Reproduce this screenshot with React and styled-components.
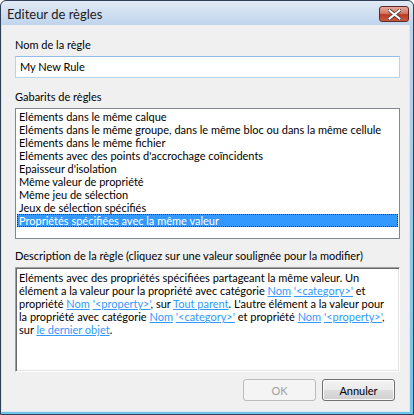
import React from "react";
import styled, { createGlobalStyle } from "styled-components";

const Global = createGlobalStyle`
  html, body {
    margin: 0;
    padding: 0;
    background: #ffffff;
  }
  body {
    font-family: "Segoe UI", Lato, "Open Sans", sans-serif;
    font-size: 11px;
    color: #000;
  }
`;

const Window = styled.div`
  width: 414px;
  height: 415px;
  box-sizing: border-box;
  border: 1px solid #2e3f57;
  border-radius: 6px 6px 0 0;
  background: linear-gradient(180deg, #e1eaf5 0px, #bed3ec 25px, #6fc3ea 100%);
  display: flex;
  flex-direction: column;
  overflow: hidden;
`;

const TitleBar = styled.div`
  height: 24px;
  flex: none;
  display: flex;
  align-items: center;
  justify-content: space-between;
  padding: 0 4px 0 6px;
`;

const Title = styled.span`
  font-size: 13px;
  color: #1b1b1b;
  line-height: 1;
  margin-top: 2px;
`;

const CloseButton = styled.div`
  width: 30px;
  height: 16px;
  margin-top: 2px;
  box-sizing: border-box;
  border: 1px solid #5a2a2a;
  border-radius: 3px;
  background: linear-gradient(180deg, #e6a89a 0%, #d47a66 45%, #bb3a24 55%, #cc5a3f 100%);
  display: flex;
  align-items: center;
  justify-content: center;
`;

const Client = styled.div`
  flex: 1;
  margin: 0 3px 2px 0;
  background: #f0f0f0;
  border-left: 1px solid #d6e1ee;
  border-right: 1px solid #dfe6ee;
  border-bottom: 1px solid #dfe6ee;
  padding: 13px 9px 0 13px;
  display: flex;
  flex-direction: column;
`;

const Label = styled.div`
  height: 13px;
  line-height: 13px;
  white-space: nowrap;
  margin-bottom: 5px;
`;

const Input = styled.div`
  height: 22px;
  box-sizing: border-box;
  border: 1px solid #b8d3ee;
  border-top-color: #93bce6;
  background: #fff;
  padding: 0 4px;
  line-height: 20px;
  margin-bottom: 12px;
`;

const ListBox = styled.div`
  height: 131px;
  box-sizing: border-box;
  border: 1px solid #828790;
  background: #fff;
  padding: 1px 1px;
  margin-bottom: 10px;
`;

const Item = styled.div`
  height: 13px;
  line-height: 13px;
  padding: 0 2px;
  white-space: nowrap;
  box-sizing: border-box;
  color: ${(p) => (p.selected ? "#fff" : "#000")};
  background: ${(p) => (p.selected ? "#3399ff" : "transparent")};
  outline: ${(p) => (p.selected ? "1px dotted #1b2a44" : "none")};
  outline-offset: -1px;
`;

const DescBox = styled.div`
  height: 105px;
  box-sizing: border-box;
  background: #fff;
  border-top: 1px solid #a0a0a0;
  border-left: 1px solid #a0a0a0;
  border-right: 1px solid #ffffff;
  border-bottom: 1px solid #ffffff;
  box-shadow: inset 1px 1px 0 #696969, inset -1px -1px 0 #e3e3e3;
  padding: 3px 3px;
  line-height: 13px;
  white-space: nowrap;
  margin-bottom: 7px;
`;

const Link = styled.a`
  color: #3399ff;
  text-decoration: underline;
  cursor: pointer;
`;

const Buttons = styled.div`
  display: flex;
  justify-content: flex-end;
  gap: 6px;
  padding-right: 5px;
`;

const Button = styled.div`
  width: 73px;
  height: 22px;
  box-sizing: border-box;
  border: 1px solid ${(p) => (p.disabled ? "#b8bcbf" : "#707070")};
  border-radius: 3px;
  background: ${(p) =>
    p.disabled
      ? "#f4f4f4"
      : "linear-gradient(180deg, #f2f2f2 0%, #ebebeb 48%, #dddddd 52%, #cfcfcf 100%)"};
  box-shadow: ${(p) => (p.disabled ? "none" : "inset 0 0 0 1px #fbfbfb")};
  color: ${(p) => (p.disabled ? "#a0a0a0" : "#000")};
  display: flex;
  align-items: center;
  justify-content: center;
`;

const templates = [
  "Eléments dans le même calque",
  "Eléments dans le même groupe, dans le même bloc ou dans la même cellule",
  "Eléments dans le même fichier",
  "Eléments avec des points d'accrochage coïncidents",
  "Epaisseur d'isolation",
  "Même valeur de propriété",
  "Même jeu de sélection",
  "Jeux de sélection spécifiés",
  "Propriétés spécifiées avec la même valeur",
];

const CloseIcon = () => (
  <svg width="13" height="11" viewBox="0 0 13 11">
    <path
      d="M1.5 1.5 L11.5 9.5 M11.5 1.5 L1.5 9.5"
      stroke="#4a3a3a"
      strokeWidth="3.6"
      strokeLinecap="square"
    />
    <path
      d="M1.5 1.5 L11.5 9.5 M11.5 1.5 L1.5 9.5"
      stroke="#ffffff"
      strokeWidth="2"
      strokeLinecap="square"
    />
  </svg>
);

export default function App() {
  return (
    <>
      <Global />
      <Window>
        <TitleBar>
          <Title>Editeur de règles</Title>
          <CloseButton>
            <CloseIcon />
          </CloseButton>
        </TitleBar>
        <Client>
          <Label>Nom de la règle</Label>
          <Input>My New Rule</Input>
          <Label>Gabarits de règles</Label>
          <ListBox>
            {templates.map((t, i) => (
              <Item key={t} selected={i === templates.length - 1}>
                {t}
              </Item>
            ))}
          </ListBox>
          <Label>Description de la règle (cliquez sur une valeur soulignée pour la modifier)</Label>
          <DescBox>
            Eléments avec des propriétés spécifiées partageant la même valeur. Un
            <br />
            élément a la valeur pour la propriété avec catégorie <Link>Nom</Link>{" "}
            <Link>'&lt;category&gt;'</Link> et
            <br />
            propriété <Link>Nom</Link> <Link>'&lt;property&gt;'</Link>, sur{" "}
            <Link>Tout parent</Link>. L'autre élément a la valeur pour
            <br />
            la propriété avec catégorie <Link>Nom</Link> <Link>'&lt;category&gt;'</Link> et
            propriété <Link>Nom</Link> <Link>'&lt;property&gt;'</Link>,
            <br />
            sur <Link>le dernier objet</Link>.
          </DescBox>
          <Buttons>
            <Button disabled>OK</Button>
            <Button>Annuler</Button>
          </Buttons>
        </Client>
      </Window>
    </>
  );
}
